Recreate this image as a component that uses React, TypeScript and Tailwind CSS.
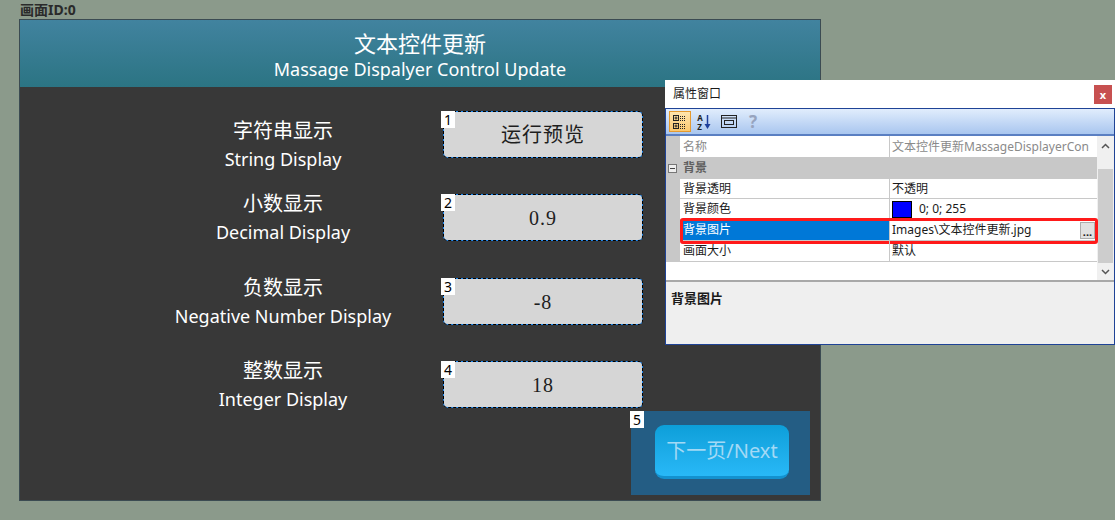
const sans = "font-['Noto_Sans','Noto_Sans_CJK_SC',sans-serif]";

type RowProps = { cn: string; en: string; value: string; num: string; rowClass: string; labelClass: string };

function DisplayRow({ cn, en, value, num, rowClass, labelClass }: RowProps) {
  return (
    <div className={`flex items-start h-[47px] ${rowClass}`}>
      <div className={`ml-[140px] w-[246px] flex flex-col items-center text-white ${labelClass}`}>
        <span className="text-[20px] leading-[28px]">{cn}</span>
        <span className="text-[18px] leading-[29px]">{en}</span>
      </div>
      <div className="relative ml-[37px] w-[200px] h-[47px] rounded-[5px] bg-[#1e88f0] border border-dashed border-black">
        <div className="h-full rounded-[4px] bg-[#d6d6d6] flex items-center justify-center font-['Liberation_Serif','Noto_Sans_CJK_SC',serif] text-[20px] text-[#1e1e1e] tracking-[1px]">
          {value}
        </div>
        <div className="absolute -left-[3px] -top-px w-[14px] h-[17px] bg-white text-black text-[14px] leading-[17px] text-center">{num}</div>
      </div>
    </div>
  );
}

function PropRow({ name, children, selected, h }: { name: string; children: React.ReactNode; selected?: boolean; h: string }) {
  return (
    <div className={`relative flex ${h}`}>
      <div className="w-[14px] shrink-0 bg-[#c8c8c8]" />
      <div className={`w-[209px] shrink-0 pl-[3px] flex items-center border-b border-[#c8c8c8] ${selected ? "bg-[#0078d7] text-white" : ""}`}>{name}</div>
      <div className="w-px shrink-0 bg-[#c8c8c8]" />
      <div className="flex-1 min-w-0 pl-[2px] flex items-center border-b border-[#c8c8c8] overflow-hidden whitespace-nowrap">{children}</div>
      {selected && (
        <div className="absolute left-[14px] -right-px -top-[2px] -bottom-[3px] border-[3px] border-[#ff1a1a] rounded-[3px]" />
      )}
    </div>
  );
}

export default function App() {
  return (
    <div className={`relative w-[1115px] h-[520px] bg-[#8b9a8b] overflow-hidden ${sans}`}>
      <div className="pl-[20px] h-[19px] pt-[1px] text-[14px] leading-[17px] font-bold text-[#2a2a2a]">画面ID:0</div>

      <div className="ml-[19px] w-[802px] h-[482px] border border-[#3b4b52] flex flex-col">
        <div className="h-[67px] bg-linear-to-b from-[#41839f] to-[#2b7483] flex flex-col items-center text-white">
          <span className="text-[22px] leading-[30px] mt-[8px]">文本控件更新</span>
          <span className="text-[18px] leading-[24px] -mt-[1px]">Massage Dispalyer Control Update</span>
        </div>
        <div className="flex-1 bg-[#383838] flex flex-col">
          <DisplayRow cn="字符串显示" en="String Display" value="运行预览" num="1" rowClass="mt-[24px]" labelClass="pt-[6px]" />
          <DisplayRow cn="小数显示" en="Decimal Display" value="0.9" num="2" rowClass="mt-[36px]" labelClass="-mt-[4px]" />
          <DisplayRow cn="负数显示" en="Negative Number Display" value="-8" num="3" rowClass="mt-[37px]" labelClass="-mt-[4px]" />
          <DisplayRow cn="整数显示" en="Integer Display" value="18" num="4" rowClass="mt-[36px]" labelClass="-mt-[4px]" />
          <div className="mt-[3px] flex justify-end pr-[10px]">
            <div className="relative w-[179px] h-[84px] bg-[#245d84] pl-[24px] pt-[14px]">
              <div className="absolute -left-px top-0 w-[14px] h-[17px] bg-white text-black text-[14px] leading-[17px] text-center">5</div>
              <div className="w-[134px] h-[54px] rounded-[9px] bg-linear-to-b from-[#0c9fd9] to-[#28b8f7] border-b-[3px] border-[#1391cf] flex items-center justify-center text-[#a3d9f5] text-[20px]">
                下一页/Next
              </div>
            </div>
          </div>
        </div>
      </div>

      <div className="absolute left-[665px] top-[80px] w-[450px] h-[265px] bg-white flex flex-col text-[12px] text-[#1a1a1a]">
        <div className="h-[28px] flex items-center justify-between pl-[8px] pr-[3px]">
          <span>属性窗口</span>
          <div className="w-[18px] h-[19px] bg-[#c75050] text-white flex items-center justify-center text-[11px] font-bold leading-none">x</div>
        </div>
        <div className="flex-1 min-h-0 border border-[#1f4396] flex flex-col">
          <div className="h-[27px] shrink-0 bg-linear-to-b from-[#e1edfc] to-[#a9c6ef] border-b-2 border-[#5a7fc2] flex items-center pl-[3px] gap-[3px]">
            <div className="w-[22px] h-[21px] border border-[#e59a2f] bg-linear-to-b from-[#ffe5ad] to-[#fbc86f] flex items-center justify-center">
              <svg width="16" height="16" viewBox="0 0 16 16" fill="none" stroke="#222" strokeWidth="1">
                <rect x="1.5" y="1.5" width="5" height="5" />
                <path d="M4 2.5v3M2.5 4h3" />
                <rect x="1.5" y="9.5" width="5" height="5" />
                <path d="M4 10.5v3M2.5 12h3" />
                <path d="M8 2.5h6M8 4.5h6M8 6.5h6M8 10.5h6M8 12.5h6M8 14.5h6" strokeDasharray="1 1" />
              </svg>
            </div>
            <div className="w-[20px] h-[21px] flex items-center justify-center gap-[1px]">
              <div className="flex flex-col text-[8px] leading-[9px] font-bold text-[#222]">
                <span>A</span>
                <span>Z</span>
              </div>
              <svg width="7" height="16" viewBox="0 0 7 16">
                <path d="M3.5 1v12" stroke="#1d3f9c" strokeWidth="1.5" />
                <path d="M0.5 10l3 5 3-5z" fill="#1d3f9c" />
              </svg>
            </div>
            <div className="w-[20px] h-[21px] flex items-center justify-center ml-[2px]">
              <svg width="16" height="13" viewBox="0 0 16 13" fill="none" stroke="#222">
                <rect x="0.5" y="0.5" width="15" height="12" />
                <path d="M0.5 3h15" />
                <rect x="3.5" y="5.5" width="9" height="4" />
              </svg>
            </div>
            <div className="w-[20px] h-[21px] flex items-center justify-center text-[17px] font-bold text-[#97a4be] ml-[1px]">?</div>
          </div>

          <div className="h-[144px] shrink-0 flex">
            <div className="flex-1 min-w-0 flex flex-col">
              <div className="flex h-[21px]">
                <div className="w-[14px] shrink-0 bg-[#c8c8c8]" />
                <div className="w-[209px] shrink-0 pl-[3px] flex items-center text-[#8a8a8a]">名称</div>
                <div className="w-px shrink-0 bg-[#c8c8c8]" />
                <div className="flex-1 min-w-0 pl-[2px] flex items-center text-[#8a8a8a] overflow-hidden whitespace-nowrap">文本控件更新MassageDisplayerCon</div>
              </div>
              <div className="h-[22px] bg-[#c8c8c8] flex items-center pl-[2px]">
                <div className="w-[9px] h-[9px] border border-[#777] bg-[#eee] flex items-center justify-center">
                  <div className="w-[5px] h-px bg-[#444]" />
                </div>
                <span className="ml-[6px] font-bold text-[#606060]">背景</span>
              </div>
              <PropRow name="背景透明" h="h-[20px]">不透明</PropRow>
              <PropRow name="背景颜色" h="h-[21px]">
                <div className="w-[20px] h-[17px] shrink-0 bg-[#0000ff] border border-black" />
                <span className="ml-[7px]">0; 0; 255</span>
              </PropRow>
              <PropRow name="背景图片" h="h-[21px]" selected>
                <span className="flex-1 min-w-0">Images\文本控件更新.jpg</span>
                <div className="w-[15px] h-[17px] shrink-0 mr-[2px] bg-[#e1e1e1] border border-[#adadad] flex items-end justify-center text-[11px] font-bold leading-[12px]">...</div>
              </PropRow>
              <PropRow name="画面大小" h="h-[21px]">默认</PropRow>
            </div>
            <div className="w-[17px] shrink-0 bg-[#f0f0f0] flex flex-col items-center">
              <svg className="mt-[7px]" width="9" height="6" viewBox="0 0 9 6">
                <path d="M1 5l3.5-3.5L8 5" stroke="#555" strokeWidth="1.5" fill="none" />
              </svg>
              <div className="mt-[20px] w-[15px] h-[94px] bg-[#cdcdcd]" />
              <svg className="mt-[6px]" width="9" height="6" viewBox="0 0 9 6">
                <path d="M1 1l3.5 3.5L8 1" stroke="#555" strokeWidth="1.5" fill="none" />
              </svg>
            </div>
          </div>

          <div className="flex-1 border-t-2 border-[#a8a8a8] bg-[#efefef] px-[5px] pt-[7px]">
            <span className="font-bold text-[13px]">背景图片</span>
          </div>
        </div>
      </div>
    </div>
  );
}
